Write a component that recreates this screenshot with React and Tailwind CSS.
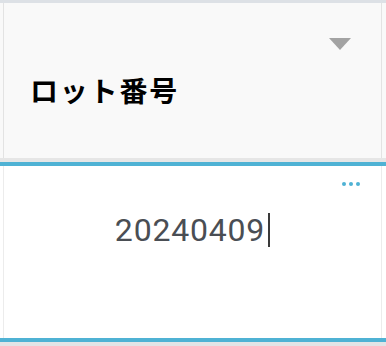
import React from 'react';

// Lot number field card: header with label + dropdown arrow, body with value input

const Dots = () => (
  <div className="flex gap-[3px]">
    {[0, 1, 2].map((i) => (
      <span key={i} className="w-[4px] h-[4px] rounded-full bg-[#4fb2d4]" />
    ))}
  </div>
);

const FieldHeader = ({ label }) => (
  <div className="h-[155px] bg-[#f9f9f9] pl-[3px] pr-[4px] flex">
    <div className="flex-1 border-x border-[#e3e3e3] flex flex-col pt-[35px] pl-[26px] pr-[30px]">
      <div className="flex justify-end">
        <svg width="22" height="12" viewBox="0 0 22 12">
          <path d="M0 0 H22 L11 12 Z" fill="#a3a3a3" />
        </svg>
      </div>
      <div className="mt-[26px] text-[28px] leading-[28px] font-bold tracking-[1.8px] text-black font-['Noto_Sans_CJK_JP',sans-serif]">
        {label}
      </div>
    </div>
  </div>
);

const FieldBody = ({ value }) => (
  <div className="h-[172px] bg-white pl-[3px] pr-[4px] flex">
    <div className="flex-1 border-x border-[#ececec] flex flex-col pt-[16px]">
      <div className="flex justify-end pr-[21px]">
        <Dots />
      </div>
      <div className="mt-[27px] flex justify-center items-start">
        <span className="mt-[1px] text-[32px] leading-[32px] text-[#4a4e54] tracking-[0.8px] font-['Roboto',sans-serif]">
          {value}
        </span>
        <span className="ml-[3px] w-[2px] h-[34px] bg-[#3a3a3a]" />
      </div>
    </div>
  </div>
);

export default function App() {
  return (
    <div className="w-[386px] h-[346px] bg-white flex flex-col overflow-hidden">
      <div className="h-[3px] bg-[#dde1e6]" />
      <FieldHeader label="ロット番号" />
      <div className="h-[4px] bg-[#e6e6e6]" />
      <div className="h-[4px] bg-[#4fb2d4]" />
      <FieldBody value="20240409" />
      <div className="h-[4px] bg-[#4fb2d4]" />
      <div className="h-[4px] bg-[#e3e4e6]" />
    </div>
  );
}
